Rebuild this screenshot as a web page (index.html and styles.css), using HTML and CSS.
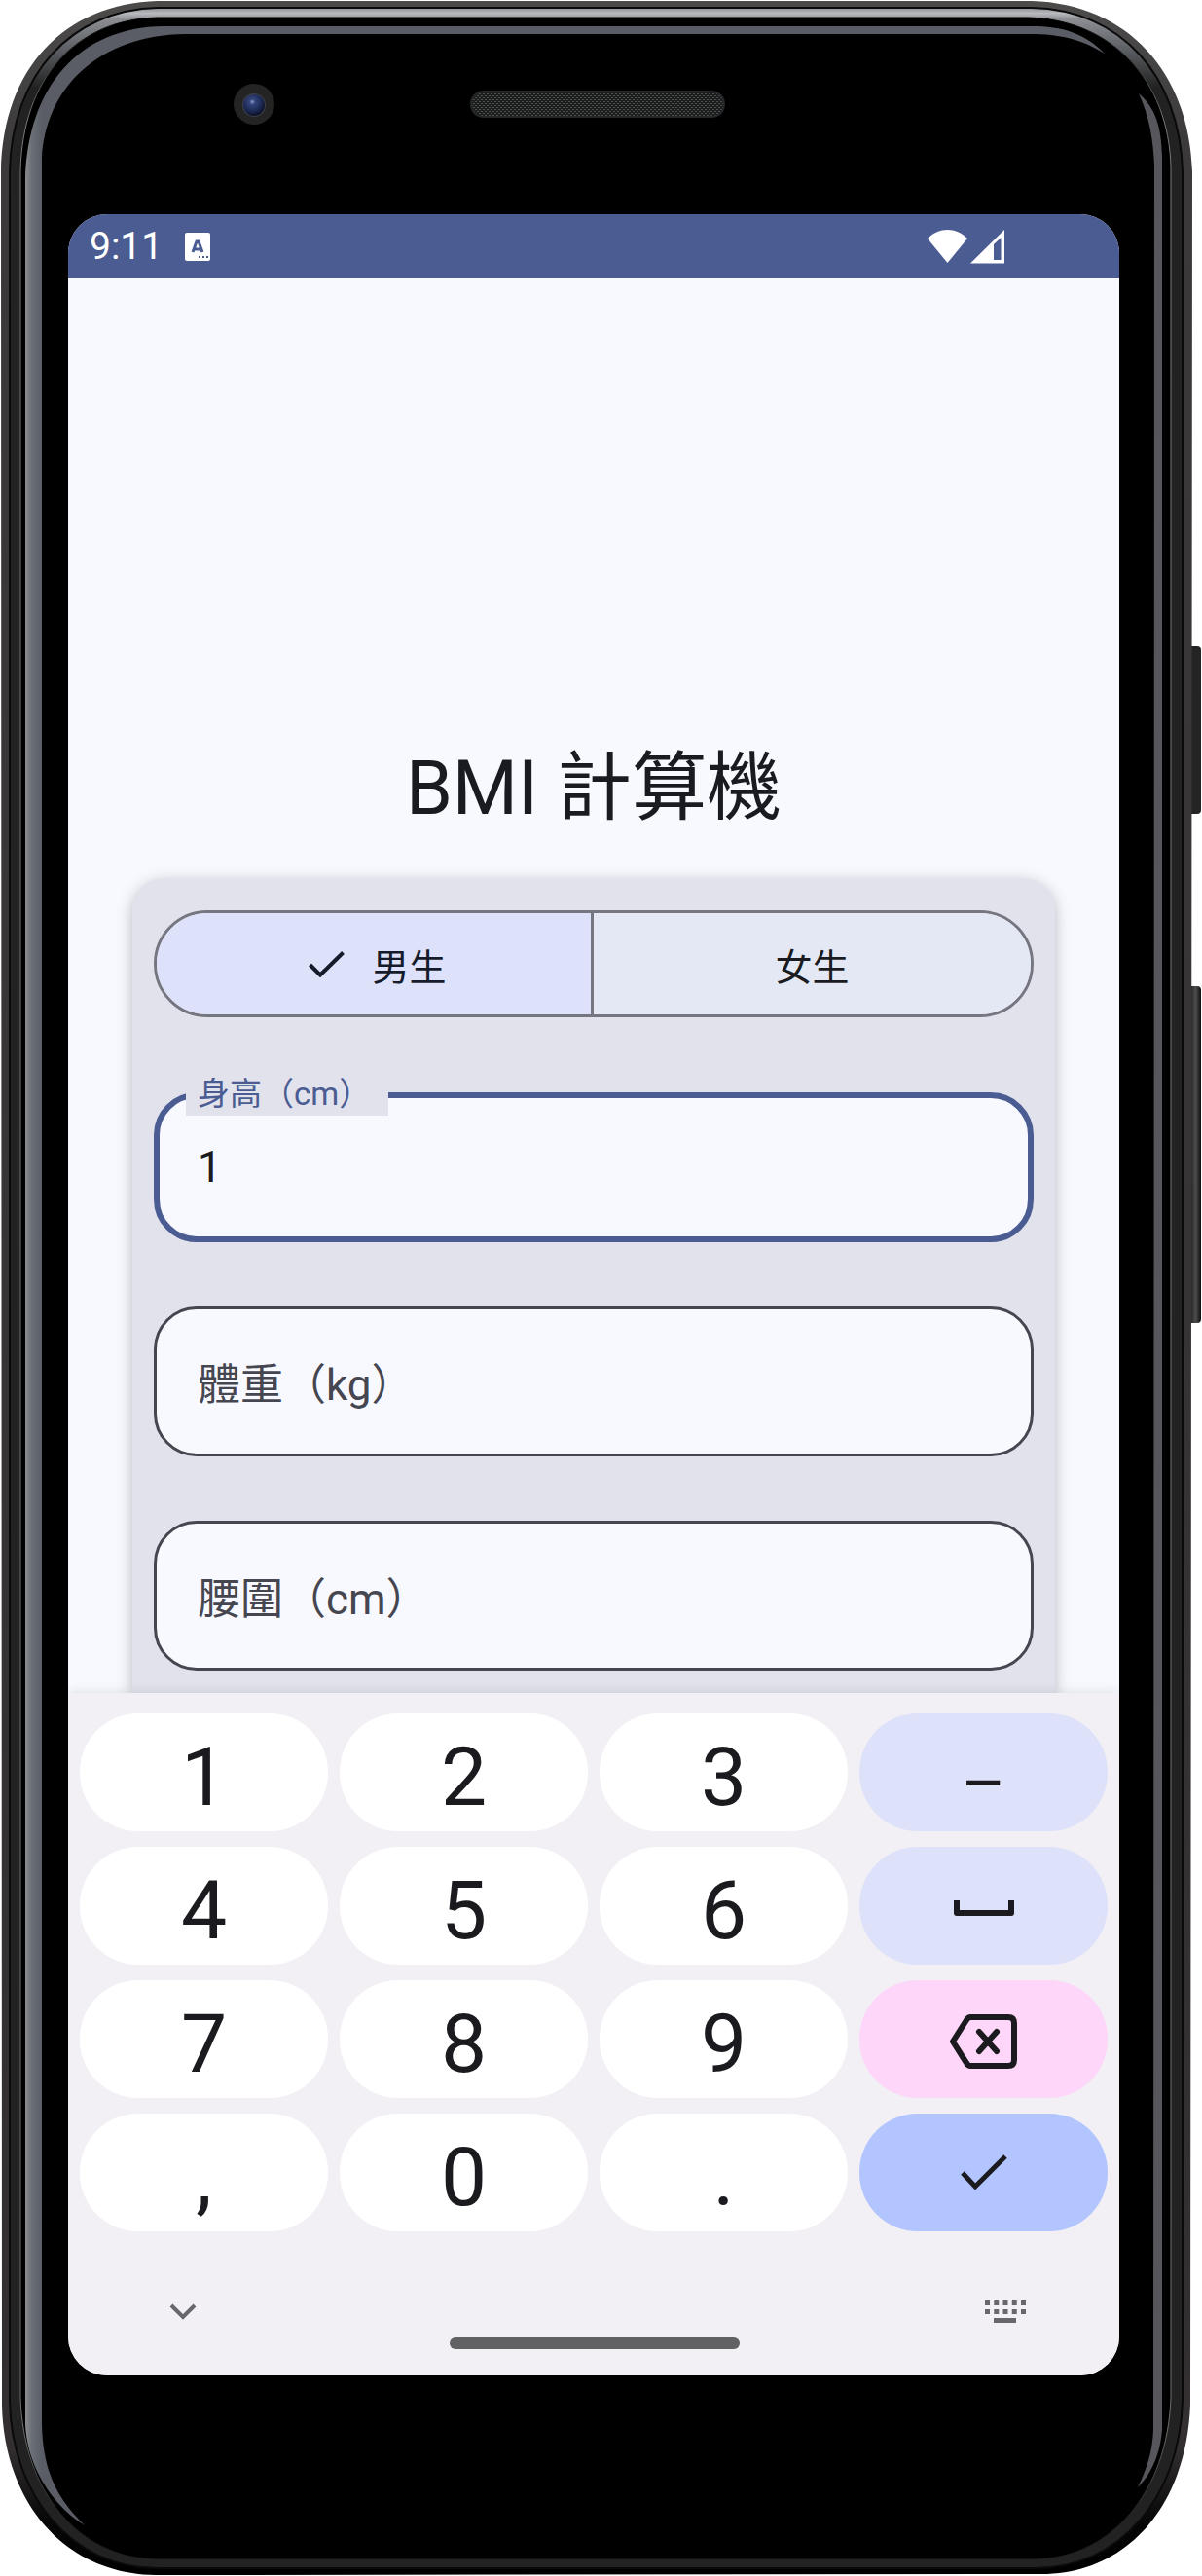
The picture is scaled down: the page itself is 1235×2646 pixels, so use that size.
FILE: index.html
```html
<!DOCTYPE html>
<html lang="zh-Hant">
<head>
<meta charset="utf-8">
<meta name="viewport" content="width=device-width, initial-scale=1">
<title>BMI 計算機</title>
<link rel="stylesheet" href="styles.css">
</head>
<body>
<div class="phone">
  <svg class="phone-body" viewBox="0 0 1235 2646" preserveAspectRatio="none" aria-hidden="true">
    <defs>
      <linearGradient id="shell" gradientUnits="userSpaceOnUse" x1="0" y1="0" x2="0" y2="2646">
        <stop offset="0" stop-color="#4c4b4a"/><stop offset=".06" stop-color="#3b393a"/>
        <stop offset=".95" stop-color="#332f31"/><stop offset=".98" stop-color="#050505"/><stop offset="1" stop-color="#000"/>
      </linearGradient>
      <linearGradient id="rim" gradientUnits="userSpaceOnUse" x1="0" y1="8" x2="0" y2="90">
        <stop offset="0" stop-color="#8d9095"/><stop offset=".07" stop-color="#b9bbbf"/><stop offset=".14" stop-color="#8c8e93"/>
        <stop offset=".55" stop-color="#585b60"/><stop offset="1" stop-color="#212221"/>
      </linearGradient>
      <linearGradient id="rim-line" gradientUnits="userSpaceOnUse" x1="0" y1="18" x2="0" y2="2628">
        <stop offset="0" stop-color="#000"/><stop offset=".01" stop-color="#1a1a1a"/><stop offset=".04" stop-color="#77797a"/>
        <stop offset=".95" stop-color="#6d6e6e"/><stop offset=".99" stop-color="#111"/><stop offset="1" stop-color="#000"/>
      </linearGradient>
      <linearGradient id="edge-left" gradientUnits="userSpaceOnUse" x1="26" y1="0" x2="43" y2="0">
        <stop offset="0" stop-color="#8b8d8f"/><stop offset=".4" stop-color="#6a6f76"/><stop offset="1" stop-color="#5a5d65"/>
      </linearGradient>
      <radialGradient id="lens" cx=".42" cy=".35" r=".65">
        <stop offset="0" stop-color="#8d9cc4"/><stop offset=".2" stop-color="#34457c"/><stop offset=".7" stop-color="#1a2750"/><stop offset="1" stop-color="#0b1024"/>
      </radialGradient>
      <linearGradient id="side-key" x1="0" y1="0" x2="1" y2="0">
        <stop offset="0" stop-color="#0a0a0a"/><stop offset=".6" stop-color="#4d4d4d"/><stop offset="1" stop-color="#0e0e0e"/>
      </linearGradient>
      <pattern id="mesh" width="4" height="4" patternUnits="userSpaceOnUse">
        <rect width="4" height="4" fill="#1c1d1d"/><rect width="2" height="1" fill="#4d504f"/><rect x="2" y="2" width="2" height="1" fill="#4d504f"/>
      </pattern>
    </defs>
    <rect x="1220" y="664" width="14" height="172" rx="4" fill="#232423"/>
    <rect x="1220" y="1013" width="14" height="346" rx="4" fill="url(#side-key)"/>
    <path d="M162 1H1060C1160 4 1222 76 1225 176L1223 2470C1219 2574 1158 2644 1070 2644L160 2645C66 2644 4 2570 2 2470L1 176C3 70 66 4 162 1Z" fill="url(#shell)"/>
    <path d="M162 8H1060C1152 10 1212 78 1215 176V2466C1212 2566 1150 2638 1064 2638H162C72 2638 12 2562 10 2466V176C12 76 74 10 162 8Z" fill="url(#rim)" stroke="#0a0a0a" stroke-width="2"/>
    <path d="M162 18H1056C1142 20 1201 82 1203 172V2462C1200 2560 1142 2628 1060 2628H164C80 2628 24 2560 21 2462V176C23 80 78 20 162 18Z" fill="#000" stroke="url(#rim-line)" stroke-width="1"/>
    <path d="M1135 55C1114 34 1092 27 1060 27H168C82 28 28 88 26 186V2490C28 2534 54 2574 87 2594C60 2568 44 2540 43 2490V164C46 90 102 36 190 35H1064C1094 36 1114 42 1135 55Z" fill="url(#edge-left)"/>
    <path d="M1170 96C1188 112 1193 130 1194 160V2496C1192 2520 1184 2540 1169 2555C1178 2536 1184 2520 1185 2496L1186 170C1185 144 1181 120 1170 96Z" fill="#56565c"/>
    <circle cx="261" cy="107" r="21" fill="#242425"/>
    <circle cx="261" cy="108" r="12" fill="#3c3f48"/>
    <circle cx="261" cy="108" r="11" fill="url(#lens)"/>
    <rect x="484" y="94" width="260" height="26" rx="13" fill="url(#mesh)" stroke="#25262a" stroke-width="2"/>
  </svg>

  <main class="screen">
    <header class="status-bar">
      <span class="clock">9:11</span>
      <svg class="status-app" viewBox="0 0 26 29" aria-hidden="true">
        <rect width="26" height="29" rx="2" fill="#fff"/>
        <path d="M8 20L12 9H14L18 20M9.500 17H16.500" fill="none" stroke="#4a5c92" stroke-width="3"/>
        <path d="M14 24h2v2h-2zM18 24h2v2h-2zM22 24h2v2h-2z" fill="#4a5c92"/>
      </svg>
      <svg class="status-signal" viewBox="0 0 79 35" aria-hidden="true">
        <path d="M0 9C12 -3 29 -3 41 9L20.500 34Z" fill="#fff"/>
        <path d="M44 34.500L79 0V34.500Z" fill="#fff"/>
        <path d="M68 15L75.500 8V31H68Z" fill="#4a5c92"/>
      </svg>
    </header>

    <section class="app">
      <h1 class="title">BMI 計算機</h1>
      <form class="card">
        <div class="segments" role="group" aria-label="性別">
          <button class="segment segment-on" type="button" aria-pressed="true">
            <svg class="segment-check" viewBox="0 0 37 27" aria-hidden="true"><path d="M1.500 14L12 24.500L35.500 1.500" fill="none" stroke="currentColor" stroke-width="4"/></svg>
            男生
          </button>
          <button class="segment" type="button" aria-pressed="false">女生</button>
        </div>
        <div class="field field-active">
          <label class="field-label" for="height">身高（cm）</label>
          <input class="field-input" id="height" type="text" inputmode="decimal" value="1">
        </div>
        <div class="field">
          <input class="field-input" id="weight" type="text" inputmode="decimal" placeholder="體重（kg）" aria-label="體重（kg）">
        </div>
        <div class="field">
          <input class="field-input" id="waist" type="text" inputmode="decimal" placeholder="腰圍（cm）" aria-label="腰圍（cm）">
        </div>
      </form>
    </section>

    <section class="keyboard" aria-label="數字鍵盤">
      <div class="keys">
        <button class="key" type="button">1</button>
        <button class="key" type="button">2</button>
        <button class="key" type="button">3</button>
        <button class="key key-dash key-tint" type="button">–</button>
        <button class="key" type="button">4</button>
        <button class="key" type="button">5</button>
        <button class="key" type="button">6</button>
        <button class="key key-icon key-tint" type="button" aria-label="空格"><svg width="62" height="16" viewBox="0 0 62 16"><path d="M3 0V13H59V0" fill="none" stroke="currentColor" stroke-width="6" stroke-linejoin="round"/></svg></button>
        <button class="key" type="button">7</button>
        <button class="key" type="button">8</button>
        <button class="key" type="button">9</button>
        <button class="key key-icon key-delete" type="button" aria-label="刪除"><svg width="70" height="56" viewBox="0 0 70 56"><path d="M21 3H60Q66 3 66 9V47Q66 53 60 53H21Q19 53 17 50L3 28L17 6Q19 3 21 3Z" fill="none" stroke="currentColor" stroke-width="6"/><path d="M30 18L48 38M48 18L30 38" stroke="currentColor" stroke-width="6" stroke-linecap="round"/></svg></button>
        <button class="key" type="button">,</button>
        <button class="key" type="button">0</button>
        <button class="key" type="button">.</button>
        <button class="key key-icon key-done" type="button" aria-label="完成"><svg width="48" height="37" viewBox="0 0 48 37"><path d="M2 19L15 33L46 2" fill="none" stroke="currentColor" stroke-width="5"/></svg></button>
      </div>
      <div class="nav">
        <button class="nav-button" type="button" aria-label="收起鍵盤"><svg width="42" height="23" viewBox="0 0 42 23"><path d="M9 5L21 17L33 5" fill="none" stroke="currentColor" stroke-width="4"/></svg></button>
        <span class="nav-handle"></span>
        <button class="nav-button" type="button" aria-label="切換鍵盤"><svg width="42" height="23" viewBox="0 0 42 23"><path d="M0 2.500H42M0 11.500H42" stroke="currentColor" stroke-width="5" stroke-dasharray="5 4.250"/><path d="M9 20.500H32" stroke="currentColor" stroke-width="5"/></svg></button>
      </div>
    </section>
  </main>
</div>
</body>
</html>
```
FILE: styles.css
```css
* {
  box-sizing: border-box;
}

body {
  margin: 0;
  background: #fff;
  color: #1a1b21;
  font-family: Roboto, "Noto Sans CJK TC", sans-serif;
}

button,
input {
  margin: 0;
  padding: 0;
  border: 0;
  color: inherit;
  font: inherit;
}

svg {
  display: block;
}

.phone {
  position: relative;
  padding: 220px 85px 206px 70px;
}

.phone-body {
  position: absolute;
  inset: 0;
  width: 100%;
  height: 100%;
}

.screen {
  position: relative;
  overflow: hidden;
  border-radius: 40px;
  background: #f8f9ff;
}

.status-bar {
  display: flex;
  align-items: center;
  height: 66px;
  padding: 0 118px 0 22px;
  background: #4a5c92;
  color: #fff;
}

.clock {
  font-size: 39px;
  line-height: 68px;
}

.status-app {
  width: 26px;
  height: 29px;
  margin-left: 23px;
}

.status-signal {
  width: 79px;
  height: 35px;
  margin-left: auto;
}

.app {
  padding: 474px 66px 0;
}

.title {
  margin: 0;
  font-size: 77px;
  font-weight: 400;
  line-height: 100px;
  text-align: center;
}

.card {
  display: flex;
  flex-direction: column;
  gap: 66px;
  margin-top: 42px;
  padding: 33px 22px 23px;
  border-radius: 33px 33px 0 0;
  background: #e2e2ec;
  box-shadow: 0 4px 16px rgba(0, 0, 0, .25);
}

.segments {
  display: flex;
  height: 110px;
  margin-bottom: 11px;
  overflow: hidden;
  border: 3px solid #757680;
  border-radius: 55px;
}

.segment {
  display: flex;
  flex: none;
  align-items: center;
  justify-content: center;
  gap: 28px;
  width: 50%;
  background: #e4e8f4;
  font-size: 38px;
}

.segment-on {
  padding-left: 8px;
  border-right: 3px solid #757680;
  background: #dde1f9;
  color: #161b2c;
}

.segment-check {
  width: 37px;
  height: 27px;
}

.field {
  position: relative;
}

.field-input {
  display: block;
  width: 100%;
  height: 154px;
  padding: 8px 42px 0;
  border: 3px solid #45464f;
  border-radius: 44px;
  outline: 0;
  background: #f8f9ff;
  font-size: 44px;
}

.field-input::placeholder {
  color: #45464f;
  opacity: 1;
}

.field-active .field-input {
  padding: 0 39px;
  border: 6px solid #4a5c92;
}

.field-label {
  position: absolute;
  top: -20px;
  left: 33px;
  padding: 0 18px 0 12px;
  background: #e2e2ec;
  color: #4a5c92;
  font-size: 33px;
  line-height: 44px;
}

.keyboard {
  position: relative;
  padding: 21px 12px 0;
  background: #f2f0f5;
  box-shadow: 0 0 12px rgba(0, 0, 0, .12);
}

.keys {
  display: grid;
  grid-template-columns: repeat(4, 1fr);
  gap: 16px 12px;
}

.key {
  height: 121px;
  padding-top: 10px;
  border-radius: 60px;
  background: #fff;
  color: #1b1b1f;
  font-size: 84px;
  line-height: 98px;
}

.key-icon {
  display: flex;
  align-items: center;
  justify-content: center;
  padding-top: 4px;
}

.key-dash {
  padding-top: 22px;
  font-size: 70px;
}

.key-tint {
  background: #dde1f9;
}

.key-delete {
  background: #fdd6f9;
}

.key-done {
  padding-top: 0;
  background: #b3c5ff;
}

.nav {
  display: flex;
  align-items: flex-start;
  justify-content: space-between;
  height: 148px;
  padding: 71px 84px 0 85px;
}

.nav-button {
  background: none;
  color: #68676b;
}

.nav-handle {
  width: 298px;
  height: 12px;
  margin-top: 38px;
  border-radius: 6px;
  background: #616164;
}
```
